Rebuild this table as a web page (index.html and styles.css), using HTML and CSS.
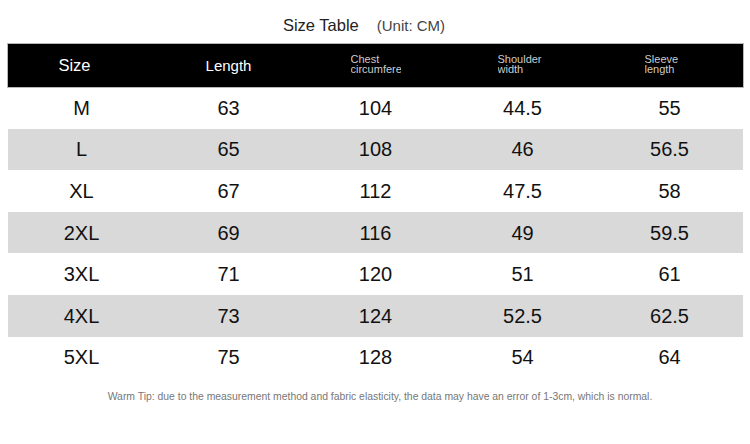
FILE: index.html
```html
<!DOCTYPE html>
<html>
<head>
<meta charset="utf-8">
<link rel="stylesheet" href="styles.css">
</head>
<body>
<div class="page">
  <div class="title">
    <span class="title-main">Size Table</span>
    <span class="title-unit">(Unit: CM)</span>
  </div>
  <div class="table">
    <div class="row head">
      <div class="cell big shift">Size</div>
      <div class="cell big narrow">Length</div>
      <div class="cell"><span class="small">Chest circumference</span></div>
      <div class="cell"><span class="small">Shoulder width</span></div>
      <div class="cell"><span class="small">Sleeve length</span></div>
    </div>
    <div class="row"><div class="cell">M</div><div class="cell">63</div><div class="cell">104</div><div class="cell">44.5</div><div class="cell">55</div></div>
    <div class="row alt"><div class="cell">L</div><div class="cell">65</div><div class="cell">108</div><div class="cell">46</div><div class="cell">56.5</div></div>
    <div class="row"><div class="cell">XL</div><div class="cell">67</div><div class="cell">112</div><div class="cell">47.5</div><div class="cell">58</div></div>
    <div class="row alt"><div class="cell">2XL</div><div class="cell">69</div><div class="cell">116</div><div class="cell">49</div><div class="cell">59.5</div></div>
    <div class="row"><div class="cell">3XL</div><div class="cell">71</div><div class="cell">120</div><div class="cell">51</div><div class="cell">61</div></div>
    <div class="row alt"><div class="cell">4XL</div><div class="cell">73</div><div class="cell">124</div><div class="cell">52.5</div><div class="cell">62.5</div></div>
    <div class="row"><div class="cell">5XL</div><div class="cell">75</div><div class="cell">128</div><div class="cell">54</div><div class="cell">64</div></div>
  </div>
  <div class="tip">Warm Tip: due to the measurement method and fabric elasticity, the data may have an error of 1-3cm, which is normal.</div>
</div>
</body>
</html>
```
FILE: styles.css
```css
html, body {
  margin: 0;
  padding: 0;
  background: #ffffff;
}
.page {
  width: 750px;
  height: 444px;
  font-family: "Liberation Sans", Arial, sans-serif;
  color: #111;
}
.title {
  height: 44px;
  display: flex;
  justify-content: center;
  align-items: center;
  gap: 18px;
  padding-right: 22px;
  box-sizing: border-box;
  padding-top: 6px;
}
.title-main {
  font-size: 16.5px;
  color: #222;
}
.title-unit {
  font-size: 15px;
  color: #444;
}
.table {
  margin-left: 8px;
  width: 735px;
}
.row {
  display: grid;
  grid-template-columns: repeat(5, 1fr);
  height: 41.6px;
  align-items: center;
}
.row.head {
  height: 43px;
  background: #000;
  box-shadow: 0 0 0 1px #b8b8b8;
  color: #fff;
}
.row.alt {
  background: #d9d9d9;
}
.cell {
  text-align: center;
  font-size: 20px;
  color: #111;
  padding-top: 1px;
}
.head .cell {
  color: #fff;
}
.cell.big {
  font-size: 16.5px;
  padding-top: 0;
}
.cell.narrow {
  font-size: 15px;
}
.cell.shift {
  padding-right: 14px;
}
.small {
  display: inline-block;
  width: 50px;
  height: 21px;
  overflow: hidden;
  font-size: 11px;
  line-height: 10px;
  color: #cccccc;
  text-align: left;
  vertical-align: middle;
  margin-top: -6px;
}
.tip {
  text-align: center;
  font-size: 10.4px;
  color: #777;
  padding-top: 13px;
  padding-left: 10px;
}
```
